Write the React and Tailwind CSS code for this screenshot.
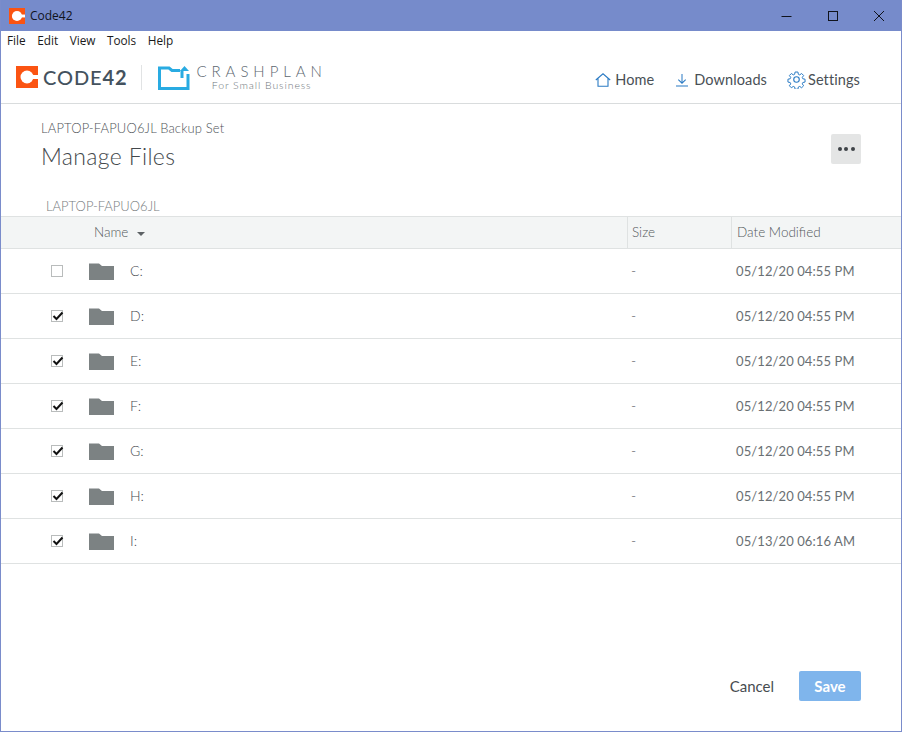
const rows = [
  { drive: "C:", checked: false, date: "05/12/20 04:55 PM" },
  { drive: "D:", checked: true, date: "05/12/20 04:55 PM" },
  { drive: "E:", checked: true, date: "05/12/20 04:55 PM" },
  { drive: "F:", checked: true, date: "05/12/20 04:55 PM" },
  { drive: "G:", checked: true, date: "05/12/20 04:55 PM" },
  { drive: "H:", checked: true, date: "05/12/20 04:55 PM" },
  { drive: "I:", checked: true, date: "05/13/20 06:16 AM" },
];

const C42Mark = ({ size, dot }) => (
  <svg width={size} height={size} viewBox="0 0 22 22" className="shrink-0">
    <rect width="22" height="22" fill="#fb5412" />
    <path d={dot} fill="#fff" />
    <rect x="11" y="9" width="11" height="4" fill="#fff" />
  </svg>
);

const FolderIcon = () => (
  <svg width="26" height="17" viewBox="0 0 26 17" className="shrink-0">
    <path d="M1 0.5H11L14 3H26V17H1Z" fill="#7c8283" />
  </svg>
);

const Checkbox = ({ checked }) => (
  <div className="relative w-[12px] h-[12px] border border-[#b9bcbc] bg-white">
    {checked && (
      <svg width="12" height="10" viewBox="0 0 12 10" className="absolute left-[-0.5px] top-0">
        <path d="M1.5 5L4.5 8L10.5 1.5" fill="none" stroke="#111" strokeWidth="2" />
      </svg>
    )}
  </div>
);

const NavItem = ({ icon, label, className }) => (
  <div className={`flex items-center ${className}`}>
    {icon}
    <span className="text-[14.5px] tracking-[0.1px] text-[#4a5056]">{label}</span>
  </div>
);

export default function App() {
  return (
    <div
      className="w-[902px] h-[732px] flex flex-col bg-white border-x border-b border-[#7a8ccb] overflow-hidden"
      style={{ fontFamily: "Lato, 'Noto Sans', sans-serif" }}
    >
      {/* title bar */}
      <div className="h-[31px] -mx-px shrink-0 bg-[#768bcb] flex items-center pl-[9px]">
        <C42Mark size={16} dot="M11 4A7 7 0 1 0 11 18A7 7 0 1 0 11 4Z" />
        <span className="ml-[5px] text-[12px] text-[#10131c]" style={{ fontFamily: "'Open Sans', sans-serif" }}>
          Code42
        </span>
        <div className="ml-auto flex items-center text-[#10131c]">
          <svg width="46" height="30" viewBox="0 0 46 30">
            <path d="M17.5 15.5H27.5" stroke="currentColor" strokeWidth="1" />
          </svg>
          <svg width="46" height="30" viewBox="0 0 46 30">
            <rect x="18.5" y="10.5" width="9" height="9" fill="none" stroke="currentColor" strokeWidth="1" />
          </svg>
          <svg width="46" height="30" viewBox="0 0 46 30">
            <path d="M18 10L28 20M28 10L18 20" fill="none" stroke="currentColor" strokeWidth="1" />
          </svg>
        </div>
      </div>

      {/* menu bar */}
      <div
        className="h-[20px] shrink-0 flex items-center gap-[11.5px] pl-[6px] text-[11.8px] text-[#1a1a1a]"
        style={{ fontFamily: "'Open Sans', sans-serif" }}
      >
        <span>File</span>
        <span>Edit</span>
        <span>View</span>
        <span>Tools</span>
        <span>Help</span>
      </div>

      {/* header */}
      <div className="h-[53px] shrink-0 flex items-center border-b border-[#d9dcdd] pl-[15px] pr-[41px]">
        <C42Mark size={22} dot="M11 4.5A6.5 6.5 0 1 0 11 17.5A6.5 6.5 0 1 0 11 4.5Z" />
        <span className="ml-[5px] text-[20px] leading-none font-medium tracking-[0.9px] text-[#44525e]">
          CODE<span className="font-bold">42</span>
        </span>
        <div className="ml-[14px] w-px h-[25px] bg-[#e1e3e4]" />
        <svg width="32" height="25" viewBox="0 0 32 25" className="ml-[16px] shrink-0">
          <path
            d="M1.5 5V23.5H30V9M1.5 5V3H11L14 5.5H22M24 13V5"
            fill="none"
            stroke="#29abe2"
            strokeWidth="3"
          />
          <path d="M22 6L26.5 1L31 6Z" fill="#29abe2" />
        </svg>
        <div className="ml-[6px] flex flex-col items-center">
          <span className="text-[15px] font-light leading-[17px] tracking-[4.95px] text-[#5c6770]">CRASHPLAN</span>
          <span className="text-[10.5px] font-light leading-[11px] tracking-[0.9px] text-[#6f777c]">For Small Business</span>
        </div>

        <div className="ml-auto pt-[5px] flex items-center">
          <NavItem
            label="Home"
            icon={
              <svg width="16" height="14" viewBox="0 0 16 14" className="mr-[4px]">
                <path d="M0.8 7L8 0.8L15.2 7M3 5.5V13.2H13V5.5" fill="none" stroke="#2b7bc4" strokeWidth="1.1" />
              </svg>
            }
          />
          <NavItem
            className="ml-[22px]"
            label="Downloads"
            icon={
              <svg width="12" height="14" viewBox="0 0 13 14" className="mr-[6px]">
                <path d="M6.5 0.5V10M2.5 6.5L6.5 10.5L10.5 6.5M0 13.5H13" fill="none" stroke="#2b7bc4" strokeWidth="1.1" />
              </svg>
            }
          />
          <NavItem
            className="ml-[20px]"
            label="Settings"
            icon={
              <svg width="19" height="19" viewBox="0 0 24 24" className="mr-[2px]">
                <circle cx="12" cy="12" r="3.5" fill="none" stroke="#2b7bc4" strokeWidth="1.4" />
                <path
                  d="M10 1.5h4l.6 3.2 1.9.8 2.7-1.9 2.8 2.8-1.9 2.7.8 1.9 3.1.6v4l-3.1.6-.8 1.9 1.9 2.7-2.8 2.8-2.7-1.9-1.9.8-.6 3.2h-4l-.6-3.2-1.9-.8-2.7 1.9-2.8-2.8 1.9-2.7-.8-1.9-3.1-.6v-4l3.1-.6.8-1.9-1.9-2.7 2.8-2.8 2.7 1.9 1.9-.8z"
                  transform="translate(1.2 1.2) scale(0.9)"
                  fill="none"
                  stroke="#2b7bc4"
                  strokeWidth="1.4"
                  strokeLinejoin="round"
                />
              </svg>
            }
          />
        </div>
      </div>

      {/* page title */}
      <div className="h-[112px] shrink-0 relative pl-[40px]">
        <div className="pt-[16px] text-[13px] font-light leading-[16px] tracking-[0.15px] text-[#4f5458]">LAPTOP-FAPUO6JL Backup Set</div>
        <div className="mt-[5px] text-[23px] font-light leading-[30px] tracking-[0.35px] text-[#43484c]">Manage Files</div>
        <div className="absolute right-[40px] top-[30px] w-[30px] h-[30px] rounded-[2px] bg-[#e4e5e5] flex items-center justify-center gap-[2.5px]">
          <span className="w-[4px] h-[4px] rounded-full bg-[#3e4347]" />
          <span className="w-[4px] h-[4px] rounded-full bg-[#3e4347]" />
          <span className="w-[4px] h-[4px] rounded-full bg-[#3e4347]" />
        </div>
        <div className="absolute left-[45px] bottom-[2px] text-[13px] font-light leading-[16px] text-[#777c80]">LAPTOP-FAPUO6JL</div>
      </div>

      {/* table head */}
      <div className="h-[33px] shrink-0 flex items-center bg-[#f3f5f5] border-y border-[#dfe2e2] text-[13.5px] font-light text-[#54595c]">
        <div className="w-[626px] h-full flex items-center pl-[93px]">
          Name
          <span className="ml-[9px] mt-[2px] w-0 h-0 border-x-[4px] border-x-transparent border-t-[4px] border-t-[#5d6265]" />
        </div>
        <div className="w-[104px] h-full flex items-center pl-[4px] border-l border-[#dfe2e2]">Size</div>
        <div className="flex-1 h-full flex items-center pl-[5px] border-l border-[#dfe2e2]">Date Modified</div>
      </div>

      {/* rows */}
      <div className="shrink-0">
        {rows.map((row) => (
          <div key={row.drive} className="h-[45px] flex items-center border-b border-[#dfe2e2] font-light text-[#474c50]">
            <div className="w-[50px] shrink-0" />
            <div className="w-[37px] shrink-0">
              <Checkbox checked={row.checked} />
            </div>
            <FolderIcon />
            <div className="w-[517px] pl-[16px] -mt-[1px] shrink-0 text-[14px]">{row.drive}</div>
            <div className="w-[105px] -mt-[1px] shrink-0 text-[14px]">-</div>
            <div className="mt-[1px] text-[13px] font-normal tracking-[0.1px] text-[#6a6f73]">{row.date}</div>
          </div>
        ))}
      </div>

      {/* footer */}
      <div className="flex-1 flex items-end justify-end pr-[40px] pb-[30px]">
        <span className="mb-[6px] text-[15px] leading-[18px] text-[#474c50]">Cancel</span>
        <button className="ml-[25px] w-[62px] h-[30px] rounded-[2px] bg-[#7fb5ec] text-[15px] font-bold text-white">
          Save
        </button>
      </div>
    </div>
  );
}
